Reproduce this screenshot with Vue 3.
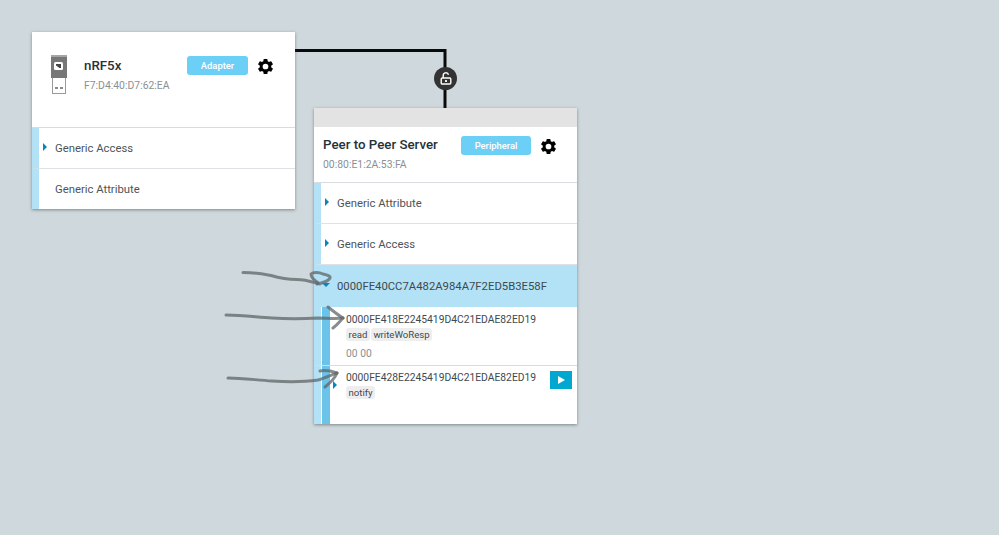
<script setup>
const peerServices = [
  { name: 'Generic Attribute', arrow: true },
  { name: 'Generic Access', arrow: true },
]
const gearPath = 'M19.14 12.94c.04-.3.06-.61.06-.94s-.02-.64-.07-.94l2.03-1.58a.49.49 0 0 0 .12-.61l-1.92-3.32a.49.49 0 0 0-.59-.22l-2.39.96a7 7 0 0 0-1.62-.94l-.36-2.54a.48.48 0 0 0-.48-.41h-3.84a.47.47 0 0 0-.47.41l-.36 2.54c-.59.24-1.13.57-1.62.94l-2.39-.96a.49.49 0 0 0-.59.22L2.74 8.87a.48.48 0 0 0 .12.61l2.03 1.58c-.05.3-.09.63-.09.94s.02.64.07.94l-2.03 1.58a.49.49 0 0 0-.12.61l1.92 3.32c.12.22.37.29.59.22l2.39-.96c.5.38 1.03.7 1.62.94l.36 2.54c.05.24.24.41.48.41h3.84c.24 0 .44-.17.47-.41l.36-2.54c.59-.24 1.13-.56 1.62-.94l2.39.96c.22.08.47 0 .59-.22l1.92-3.32a.48.48 0 0 0-.12-.61l-2.01-1.58zM12 15.6a3.6 3.6 0 1 1 0-7.2 3.6 3.6 0 0 1 0 7.2z'
</script>

<template>
  <div class="canvas">
    <svg class="wires" width="999" height="535" viewBox="0 0 999 535">
      <path d="M295 50.5H445V108" fill="none" stroke="#0a0a0a" stroke-width="3" />
    </svg>

    <div class="lock">
      <svg width="12" height="13" viewBox="0 0 12 13">
        <path d="M3.200 6V3.500a2.700 2.700 0 0 1 5.300-.7" fill="none" stroke="#fff" stroke-width="1.400" />
        <rect x="1.200" y="6" width="9.600" height="6" rx="1" fill="none" stroke="#fff" stroke-width="1.400" />
        <rect x="5" y="8.100" width="2" height="1.800" fill="#fff" />
      </svg>
    </div>

    <section class="card adapter">
      <header class="adapter-head">
        <svg class="usb" width="16" height="40" viewBox="0 0 16 40">
          <rect x="1.500" y="20" width="13" height="18.500" fill="#fff" stroke="#9a9a9a" stroke-width="1" />
          <rect x="0" y="0" width="16" height="23" fill="#777" />
          <rect x="0" y="0" width="16" height="2" fill="#a5a5a5" />
          <rect x="3" y="7" width="9" height="8" rx="1.500" fill="#fff" />
          <path d="M5 9h5v4H8.500L5 10.500z" fill="#444" />
          <rect x="4" y="32" width="3" height="2" fill="#8a8a8a" />
          <rect x="9" y="32" width="3" height="2" fill="#8a8a8a" />
        </svg>
        <div class="titles adapter-titles">
          <div class="name">nRF5x</div>
          <div class="addr">F7:D4:40:D7:62:EA</div>
        </div>
        <span class="role adapter-role">Adapter</span>
        <svg class="gear" width="19" height="19" viewBox="0 0 24 24"><path :d="gearPath" /></svg>
      </header>
      <div class="service">
        <i class="tri right"></i>
        <span>Generic Access</span>
      </div>
      <div class="service">
        <span>Generic Attribute</span>
      </div>
    </section>

    <section class="card peer">
      <div class="peer-top"></div>
      <header class="peer-head">
        <div class="titles">
          <div class="name">Peer to Peer Server</div>
          <div class="addr">00:80:E1:2A:53:FA</div>
        </div>
        <span class="role peer-role">Peripheral</span>
        <svg class="gear" width="19" height="19" viewBox="0 0 24 24"><path :d="gearPath" /></svg>
      </header>
      <div v-for="s in peerServices" :key="s.name" class="service">
        <i class="tri right"></i>
        <span>{{ s.name }}</span>
      </div>
      <div class="service selected">
        <i class="tri down"></i>
        <span>0000FE40CC7A482A984A7F2ED5B3E58F</span>
      </div>
      <div class="char first">
        <div class="uuid">0000FE418E2245419D4C21EDAE82ED19</div>
        <div class="tags"><span class="tag">read</span><span class="tag">writeWoResp</span></div>
        <div class="value">00 00</div>
      </div>
      <div class="char second">
        <i class="tri right small"></i>
        <div class="uuid">0000FE428E2245419D4C21EDAE82ED19</div>
        <div class="tags"><span class="tag">notify</span></div>
        <button class="play" aria-label="notify">
          <svg width="8" height="8" viewBox="0 0 8 8"><path d="M1 0l7 4-7 4z" fill="#fff" /></svg>
        </button>
      </div>
    </section>

    <svg class="ink" width="999" height="535" viewBox="0 0 999 535">
      <g fill="none" stroke="#5f6568" stroke-opacity=".75" stroke-width="3" stroke-linecap="round" stroke-linejoin="round">
        <path d="M243 272.500c10 0 18 1 28 3 10 3 18 4 26 4 8 0 14 2 21 4" />
        <path d="M320 284c-5-3-9-7-9-10 2-2 8-2 12 0 4 1 8 2 7 4-2 4-8 5-13 6" />
        <path d="M226 315c16 0 30 2 46 3 14 1 30 1 46 0 8 0 17 1 25 0" />
        <path d="M328 307c5 4 10 8 15 11-3 3-6 7-10 10" />
        <path d="M228 378c14 0 28 2 44 3 16 1 32 1 46-1 7-2 13-5 19-7" />
        <path d="M320 371c5-1 11 0 17 2-2 5-7 10-12 14" />
      </g>
    </svg>
  </div>
</template>

<style>
html, body { margin: 0; background: #cfd8dc; }
</style>

<style scoped>
.canvas {
  position: relative;
  width: 999px;
  height: 535px;
  overflow: hidden;
  background: #cfd8dc;
  font-family: Roboto, "Liberation Sans", sans-serif;
  color: #37474f;
}
.wires, .ink { position: absolute; left: 0; top: 0; }
.ink { pointer-events: none; filter: blur(.6px); }
.lock {
  position: absolute;
  left: 434px;
  top: 66.500px;
  width: 23px;
  height: 23px;
  border-radius: 50%;
  background: #333;
  display: flex;
  align-items: center;
  justify-content: center;
}
.card {
  position: absolute;
  width: 263px;
  background: #fff;
  box-shadow: 0 1px 3px rgba(60, 70, 75, .55);
  display: flex;
  flex-direction: column;
}
.adapter { left: 32px; top: 32px; height: 177px; }
.peer { left: 314px; top: 108px; height: 316px; }
.adapter-head {
  height: 95px;
  flex: none;
  display: flex;
  align-items: flex-start;
  border-bottom: 1px solid #d9dcde;
}
.usb { margin: 23px 0 0 19px; flex: none; }
.adapter-titles { margin: 25px 0 0 17px; width: 103px; }
.name { font-size: 13.300px; font-weight: 500; line-height: 17px; color: #263238; white-space: nowrap; }
.addr { font-size: 10.400px; line-height: 14px; margin-top: 5px; color: #8a9094; white-space: nowrap; }
.role {
  flex: none;
  height: 19px;
  border-radius: 3px;
  background: #6ccff6;
  color: #fff;
  font-size: 9.400px;
  font-weight: 500;
  line-height: 19px;
  text-align: center;
}
.adapter-role { width: 61px; margin-top: 24px; }
.adapter-head .gear { margin: 25px 0 0 8px; }
.gear { flex: none; fill: #000; }
.peer-top { height: 19px; flex: none; background: #e3e3e3; }
.peer-head {
  height: 55px;
  flex: none;
  display: flex;
  align-items: flex-start;
  border-bottom: 1px solid #d9dcde;
}
.peer-head .titles { margin: 9px 0 0 9px; width: 138px; }
.peer-role { width: 70px; margin-top: 9px; }
.peer-head .gear { margin: 10px 0 0 8px; }
.service {
  position: relative;
  height: 39px;
  padding-top: 1px;
  flex: none;
  box-sizing: content-box;
  border-bottom: 1px solid #dfe2e4;
  border-left: 7px solid #b3e1f5;
  display: flex;
  align-items: center;
  padding-left: 16px;
  font-size: 11.300px;
  color: #4b5459;
}
.adapter .service:last-child { border-bottom: 0; }
.service.selected {
  height: 41px;
  border-left-color: #b3e1f5;
  border-bottom: 0;
  background: #b3e1f5;
  color: #3d4a50;
}
.tri { position: absolute; width: 0; height: 0; border-style: solid; }
.tri.right {
  left: 4px;
  top: 15px;
  border-width: 4.500px 0 4.500px 4.500px;
  border-color: transparent transparent transparent #0a84c1;
}
.tri.down {
  left: 1px;
  top: 18px;
  border-width: 4px 4px 0 4px;
  border-color: #0a84c1 transparent transparent transparent;
}
.char {
  position: relative;
  flex: none;
  box-sizing: border-box;
  padding: 6px 0 0 32px;
  background:
    linear-gradient(#6bc3ea, #6bc3ea) 8px 0 / 8px 100% no-repeat,
    linear-gradient(#b3e1f5, #b3e1f5) 0 0 / 7px 100% no-repeat;
  font-size: 10.300px;
  color: #3d4a50;
}
.char.first { height: 59px; border-bottom: 1px solid #d9dcde; }
.char.second { height: 58px; padding-top: 5px; }
.tri.small { left: 19px; top: 15px; }
.uuid { line-height: 14px; white-space: nowrap; }
.tags { display: flex; gap: 1px; margin-top: 1px; }
.tag {
  height: 13px;
  line-height: 13px;
  padding: 0 2.500px;
  border-radius: 3px;
  background: #eeeeee;
  font-size: 9.600px;
  color: #3d4a50;
}
.value { margin-top: 6px; font-size: 10.300px; line-height: 14px; color: #8a9094; }
.play {
  position: absolute;
  right: 5px;
  top: 5px;
  width: 22px;
  height: 18px;
  padding: 0;
  border: 0;
  background: #00a7cf;
  display: flex;
  align-items: center;
  justify-content: center;
}
</style>
